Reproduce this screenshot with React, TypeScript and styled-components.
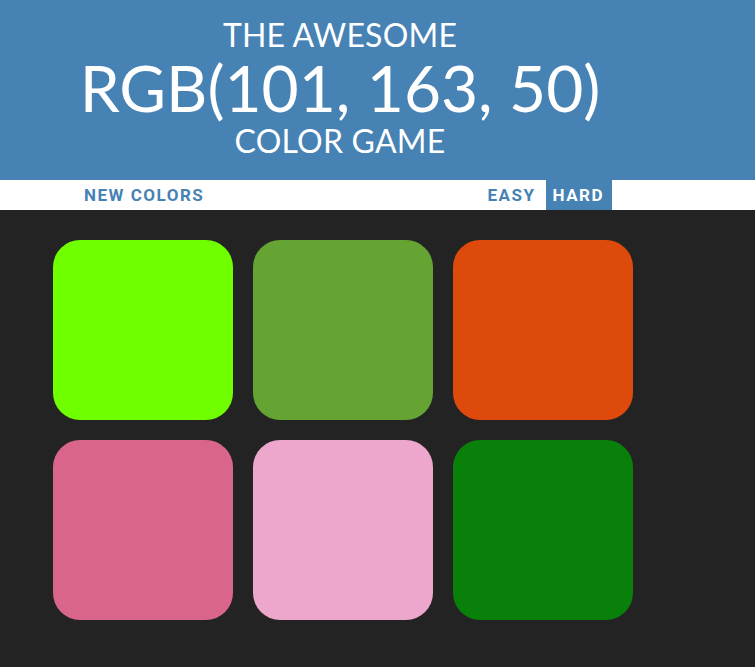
import React from "react";
import styled, { createGlobalStyle } from "styled-components";

const Global = createGlobalStyle`
  html, body { margin: 0; padding: 0; }
  body {
    background: #232323;
    font-family: Lato, "Open Sans", sans-serif;
  }
`;

const Header = styled.header`
  background: #4682b4;
  color: #fff;
  height: 180px;
`;

const Frame = styled.div`
  width: 686px;
  height: 100%;
`;

const Title = styled.h1`
  margin: 0;
  padding: 16px 6px 22px 0;
  font-size: 32px;
  font-weight: 400;
  text-transform: uppercase;
  text-align: center;
  letter-spacing: 0.2px;
`;

const TitleLine = styled.span<{ $h: number }>`
  display: block;
  line-height: ${(p) => p.$h}px;
`;

const ColorDisplay = styled.span`
  display: block;
  font-size: 200%;
  line-height: 70px;
  letter-spacing: 0;
`;

const Stripe = styled.div`
  background: #fff;
  height: 30px;
`;

const StripeInner = styled.div`
  width: 600px;
  height: 100%;
  margin: 0 auto;
  padding: 0 31px 0 35px;
  box-sizing: border-box;
  display: flex;
  align-items: stretch;
  gap: 3px;
`;

const Spacer = styled.span`
  flex: 1;
`;

const Button = styled.button<{ $active?: boolean }>`
  border: none;
  margin: 0;
  padding: 0 8px 0 6px;
  height: 100%;
  font-family: Roboto, "Liberation Sans", sans-serif;
  font-size: 17px;
  font-weight: 700;
  letter-spacing: 1.5px;
  text-transform: uppercase;
  background: ${(p) => (p.$active ? "#4682b4" : "#fff")};
  color: ${(p) => (p.$active ? "#fff" : "#4682b4")};
  cursor: pointer;
  outline: none;
`;

const Board = styled.div`
  width: 600px;
  margin: 20px auto 0;
  padding: 10px;
  box-sizing: border-box;
  display: grid;
  grid-template-columns: repeat(3, 180px);
  gap: 20px;
`;

const Square = styled.div<{ $color: string }>`
  width: 180px;
  height: 180px;
  border-radius: 15%;
  background: ${(p) => p.$color};
`;

const colors = [
  "rgb(111, 255, 0)",
  "rgb(101, 163, 50)",
  "rgb(222, 74, 11)",
  "rgb(217, 101, 138)",
  "rgb(237, 166, 204)",
  "rgb(8, 128, 10)",
];

export default function App() {
  return (
    <>
      <Global />
      <Header>
        <Frame>
          <Title>
            <TitleLine $h={37}>The Awesome</TitleLine>
            <ColorDisplay>RGB(101, 163, 50)</ColorDisplay>
            <TitleLine $h={35}>Color Game</TitleLine>
          </Title>
        </Frame>
      </Header>
      <Stripe>
        <Frame>
          <StripeInner>
            <Button>New Colors</Button>
            <Spacer />
            <Button>Easy</Button>
            <Button $active>Hard</Button>
          </StripeInner>
        </Frame>
      </Stripe>
      <Frame>
        <Board>
          {colors.map((c) => (
            <Square key={c} $color={c} />
          ))}
        </Board>
      </Frame>
    </>
  );
}
